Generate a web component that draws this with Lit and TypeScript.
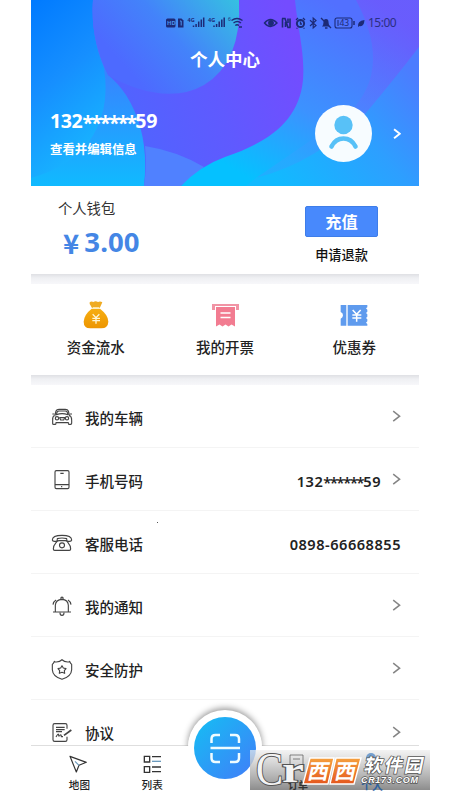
import { LitElement, html, css, svg } from "lit";
import { customElement } from "lit/decorators.js";

const chevron = html`<svg class="chev" width="9" height="13" viewBox="0 0 9 13"><path d="M1.2 1.2 7.6 6.2 1.2 11.2" fill="none" stroke="currentColor" stroke-width="1.5"/></svg>`;

const masked = (tail = "59") => html`132<span class="stars">******</span>${tail}`;

const icons = {
  car: svg`<path d="M71 138 75 122Q77 117 84 117H103Q110 117 112 122L116 138M68 136Q64 142 65 152V160Q65 162 68 162H73Q75 162 75 157H112Q112 162 114 162H119Q122 162 122 159V150Q122 142 118 136M64 131H70M117 131H123M76 133Q93 127 111 133L108 124Q107 122 103 122H84Q80 122 79 124ZM86 142H101L98 149H89Z"/><circle cx="78" cy="144" r="5"/><circle cx="108" cy="144" r="5"/>`,
  phone: svg`<rect x="72" y="302" width="42" height="54" rx="4"/><path d="M72 344H114M88 310H98M92 348V352"/>`,
  tel: svg`<path d="M64 511Q64 497 93 497Q122 497 122 511Q121 515 116 515H110Q107 514 107 507Q93 503 79 507Q79 514 76 515H70Q65 515 64 511ZM75 519Q78 513 84 513H103Q109 513 111 519Q119 528 119 538Q119 542 115 542H71Q67 542 67 538Q67 528 75 519Z"/><circle cx="93" cy="527" r="7.500"/>`,
  bell: svg`<path d="M66 154H120M73 154V134Q74 117 93 116Q111 117 112 134V154M87 156Q87 164 93 164Q99 164 99 156M66 132Q67 123 75 118M120 132Q119 123 111 118"/><circle cx="93" cy="113" r="3.500"/>`,
  shield: svg`<path d="M93 297Q99 304 110 304Q114 304 116 302Q118 308 122 311V327Q121 347 93 356Q65 347 64 327V311Q68 308 70 302Q72 304 76 304Q87 304 93 297ZM93 315 97 322 105 324 100 330 101 338 93 335 85 338 86 330 81 324 89 322Z"/>`,
  doc: svg`<path d="M108 144V134Q108 129 103 129H71Q66 129 66 134V177Q66 182 71 182H103Q108 182 108 177V168M75 140H101M75 147H101M75 153H93M75 169Q82 157 83 162Q82 170 88 163Q91 160 91 168H96"/><path d="M99 164 121 148" stroke-width="5"/>`,
};

type Row = { icon: unknown; top: number; label: string; value?: unknown; arrow: boolean };

const rows: Row[] = [
  { icon: icons.car, top: 107, label: "我的车辆", arrow: true },
  { icon: icons.phone, top: 297, label: "手机号码", value: masked(), arrow: true },
  { icon: icons.tel, top: 487, label: "客服电话", value: "0898-66668855", arrow: false },
  { icon: icons.bell, top: 103, label: "我的通知", arrow: true },
  { icon: icons.shield, top: 292, label: "安全防护", arrow: true },
  { icon: icons.doc, top: 124, label: "协议", arrow: true },
];

@customElement("app-root")
export class AppRoot extends LitElement {
  static styles = css`
    :host {
      display: block;
      width: 450px;
      height: 800px;
      overflow: hidden;
      position: relative;
      background: #fff;
      font-family: "Noto Sans", "Noto Sans CJK SC", sans-serif;
      color: #222;
    }
    * { box-sizing: border-box; }
    svg { display: block; flex: none; }
    .phone { width: 388px; height: 800px; margin-left: 31px; display: flex; flex-direction: column; }
    .stars { vertical-align: -0.07em; line-height: 0; }
    .header { height: 186px; flex: none; position: relative; color: #fff; overflow: hidden; }
    .bg { position: absolute; inset: 0; }
    .inner { position: relative; height: 100%; display: flex; flex-direction: column; }
    .status { height: 18px; margin-top: 14px; padding-left: 134px; display: flex; align-items: center; color: #1d2a77; }
    .status .right { margin-left: 18px; }
    .time { font-size: 12px; line-height: 18px; margin-left: 1px; letter-spacing: -0.5px; color: #2b2f83; }
    .title { height: 26px; margin-top: 14px; line-height: 26px; text-align: center; font-size: 17.5px; font-weight: 700; }
    .profile { display: flex; align-items: center; height: 62px; margin-top: 31px; padding: 0 18px 0 19px; }
    .who { flex: 1; display: flex; flex-direction: column; gap: 8px; padding-bottom: 1px; }
    .num { font-size: 19.6px; line-height: 24px; font-weight: 700; letter-spacing: -0.4px; padding-top: 1px; }
    .num .stars { letter-spacing: -1.8px; vertical-align: -0.1em; }
    .edit { font-size: 12.4px; line-height: 18px; font-weight: 700; }
    .profile .chev { margin-left: 20px; width: 8px; height: 12px; }
    .profile .chev path { stroke-width: 2.2; }
    .wallet { height: 88px; flex: none; display: flex; justify-content: space-between; padding: 0 41px 0 27px; }
    .wlabel { font-size: 14.3px; line-height: 20px; margin-top: 13px; color: #333; }
    .money { font-size: 27.5px; line-height: 34px; font-weight: 700; color: #4486e5; margin: 6px 0 0 5px; display: flex; gap: 5px; letter-spacing: 0.1px; }
    .acts { width: 73px; padding-top: 20px; display: flex; flex-direction: column; align-items: center; }
    .btn { width: 73px; height: 31px; background: #4889fc; border: 1px solid #3e7de9; border-radius: 2px; color: #fff; font-size: 16.2px; font-weight: 700; line-height: 30px; text-align: center; }
    .refund { font-size: 13.2px; line-height: 20px; margin-top: 8px; font-weight: 500; color: #111; white-space: nowrap; }
    .cjk { font-family: "Noto Sans CJK SC", sans-serif; }
    .gap { height: 10px; flex: none; background: linear-gradient(#dfe0e4, #eff0f3 40%, #f7f7fa); }
    .quick { height: 91px; flex: none; display: flex; }
    .q { flex: 1; display: flex; flex-direction: column; align-items: center; padding-top: 17px; font: 500 14.5px/20px "Noto Sans CJK SC", sans-serif; gap: 8px; }
    .list { flex: none; height: 370px; overflow: hidden; }
    .row { height: 63.1px; display: flex; align-items: center; padding: 2px 18px 0 20px; border-bottom: 1px solid #f4f4f4; }
    .row .label { margin-left: 12px; flex: 1; font: 500 14.5px/22px "Noto Sans CJK SC", sans-serif; padding-top: 1px; color: #222; }
    .row .value { font-size: 14.6px; font-weight: 600; letter-spacing: 0.5px; padding-top: 1px; }
    .row .value .stars { letter-spacing: -1.3px; }
    .row .chev { color: #858585; margin-left: 11px; margin-top: -1px; }
    .ico { fill: none; stroke: #444; stroke-width: 3.4; stroke-linejoin: round; }
    .tabs { height: 55px; flex: none; margin-top: -10px; background: #fff; border-top: 1px solid #dedede; padding: 0 12px; display: flex; position: relative; }
    .tab { flex: 1; display: flex; flex-direction: column; align-items: center; padding-top: 8px; font: 500 10.6px/16px "Noto Sans CJK SC", sans-serif; gap: 3px; }
    .scan { position: absolute; left: 157px; top: -35px; width: 74px; height: 74px; border-radius: 50%; background: #fff; display: grid; place-items: center; }
    .halo { position: absolute; left: 145px; top: -50px; width: 98px; height: 50px; overflow: hidden; }
    .halo i { position: absolute; left: 12px; top: 14px; width: 74px; height: 74px; border-radius: 50%; box-shadow: 0 -2px 6px 0 #999; }
    .mark { position: absolute; left: 250px; top: 750px; overflow: visible; }
    .dot { position: absolute; left: 157px; top: 522px; width: 1px; height: 1px; background: #555; }
  `;

  private background() {
    return html`<svg class="bg" width="388" height="186" viewBox="0 0 388 186">
      <defs>
        <linearGradient id="a" x1="0" y1="0" x2=".35" y2="1"><stop stop-color="#007aff"/><stop offset=".5" stop-color="#168fff"/><stop offset="1" stop-color="#18b3ff"/></linearGradient>
        <linearGradient id="b" x1="0" y1="0" x2="0" y2="1"><stop offset=".35" stop-color="#3a80ff"/><stop offset="1" stop-color="#10baff"/></linearGradient>
        <linearGradient id="c" gradientUnits="userSpaceOnUse" x1="90" y1="110" x2="270" y2="50"><stop stop-color="#5064ff"/><stop offset=".5" stop-color="#5f5aff"/><stop offset="1" stop-color="#744cff"/></linearGradient>
        <linearGradient id="d" gradientUnits="userSpaceOnUse" x1="110" y1="85" x2="205" y2="0"><stop stop-color="#4d6aff"/><stop offset=".45" stop-color="#4383fa"/><stop offset="1" stop-color="#36bfe2"/></linearGradient>
        <linearGradient id="e" gradientUnits="userSpaceOnUse" x1="330" y1="20" x2="230" y2="186"><stop stop-color="#5270ff"/><stop offset=".55" stop-color="#3c92ff"/><stop offset="1" stop-color="#05c1ff"/></linearGradient>
        <linearGradient id="f" gradientUnits="userSpaceOnUse" x1="370" y1="20" x2="265" y2="165"><stop stop-color="#7552fb"/><stop offset=".5" stop-color="#547bff"/><stop offset="1" stop-color="#2ba7ff"/></linearGradient>
        <linearGradient id="g" gradientUnits="userSpaceOnUse" x1="380" y1="70" x2="250" y2="186"><stop stop-color="#4c7cff"/><stop offset=".45" stop-color="#2d9fff"/><stop offset="1" stop-color="#12baff"/></linearGradient>
      </defs>
      <rect width="388" height="186" fill="url(#b)"/>
      <path d="M0 0H62Q60 38 73 68Q80 112 57 143Q36 168 0 178Z" fill="url(#a)"/>
      <path d="M62 0H280V186H113Q119 133 95 95Q87 83 77 75Q59 38 62 0Z" fill="url(#c)"/>
      <path d="M62 0H208Q211 62 173 85Q145 101 105 88Q88 82 77 75Q59 38 62 0Z" fill="url(#d)"/>
      <path d="M114 146Q146 151 173 167L150 186H113Q116 166 114 146Z" fill="#5081ff"/>
      <path d="M264 0C267 31 274 53 272 80C268 121 238 142 194 157Q169 166 150 186H388V0Z" fill="url(#e)"/>
      <path d="M325 0H388V48Q357 87 331 118Q284 164 225 178Q270 147 311 119Q365 75 325 0Z" fill="url(#f)" opacity=".65"/>
      <path d="M388 47Q361 82 335 113Q284 163 225 178L215 186H388Z" fill="url(#g)"/>
    </svg>`;
  }

  private statusIcons() {
    const bars = (x: number) => svg`<path d="M${x} 27V25.500M${x + 2.6} 27V24M${x + 5.2} 27V21.500M${x + 7.8} 27V19.500M${x + 10.2} 27V17.500" stroke="currentColor" stroke-width="1.500"/><text x="${x - 6}" y="22" font-size="5.500" font-weight="700" fill="currentColor">4G</text>`;
    return html`<svg width="80" height="18" viewBox="165 14 80 18">
        <rect x="166" y="18.500" width="9.500" height="9" rx="1.500" fill="currentColor"/><text x="167" y="25.200" font-size="5.800" font-weight="700" fill="#4a94ee">HD</text>
        <path d="M178 18.500H181.500L183.500 20.500V27.500H178Z" fill="currentColor"/><path d="M180 21H181.200V25.500" stroke="#4a94ee" fill="none"/>
        ${bars(193.5)}${bars(214)}
        <path d="M231.500 20.500Q237 16.500 242.500 20.500M233.500 23Q237.200 20 241 23M235.300 25.500Q237 24 239 25.500M239 27H242" fill="none" stroke="currentColor" stroke-width="1.300"/><text x="228" y="21" font-size="5" fill="currentColor">6</text>
      </svg>
      <svg class="right" width="104" height="18" viewBox="263 14 104 18" fill="none" stroke="currentColor" stroke-width="1.400">
        <path d="M264.500 23Q270.500 16 277 23Q270.500 30 264.500 23Z"/><circle cx="271" cy="23" r="2.200" fill="currentColor"/>
        <path d="M282.500 18.500V27.500M290 18.500V27.500M282 18.500H285L288 27.500H290.500M285.500 22V27M288 18.500V23" stroke-width="1.600"/>
        <circle cx="300.500" cy="23.500" r="3.600" stroke-width="2"/><path d="M296 20 298 18M305 20 303 18M297.500 28 296.500 28.500M303.500 28 304.500 28.500M300.500 21.500V24H302" stroke-width="1.300"/>
        <path d="M310 20.200 316 25.500 313.200 28V18L316 20.500 310 26" stroke-width="1.200"/>
        <path d="M322 26.500Q323.500 25 323.500 22Q323.500 19 326 19Q328.500 19 328.500 22Q328.500 25 330 26.500Z" fill="currentColor" stroke="none"/><path d="M321 18 331 28M325 28H327.500"/>
        <rect x="335" y="18" width="17" height="10" rx="2" stroke-width="1.100"/><path d="M354 21V25" stroke-width="1.500"/>
        <text x="339.500" y="26" font-size="8.500" fill="currentColor" stroke="none">43</text><path d="M338 20V26" stroke-width="1"/>
        <path d="M358 27Q357 21 364.500 20Q364 27 359.500 26Z" fill="currentColor" stroke="none"/>
      </svg>`;
  }

  private watermark() {
    return html`<svg class="mark" width="180" height="40" viewBox="0 0 180 40">
      <defs>
        <linearGradient id="wg" x1="0" y1="0" x2="0" y2="1"><stop stop-color="#eeeeee" stop-opacity=".7"/><stop offset=".45" stop-color="#bdbdbd" stop-opacity=".82"/><stop offset="1" stop-color="#858585" stop-opacity=".94"/></linearGradient>
        <linearGradient id="wo" x1="0" y1="0" x2="0" y2="1"><stop stop-color="#f5a03e"/><stop offset="1" stop-color="#e4571e"/></linearGradient>
      </defs>
      <rect width="180" height="40" fill="url(#wg)"/>
      <g fill="none" stroke="#555" stroke-width="1"><path d="M40 5H53V20H40ZM43 9H50" opacity=".7"/></g>
      <circle cx="121" cy="8" r="5" fill="#749fce"/>
      <text class="cjk" x="38" y="38.500" font-size="10" font-weight="700" fill="#333">订单</text>
      <text class="cjk" x="111" y="40" font-size="11" font-weight="700" fill="#2f629f">个人</text>
      <g font-family="Liberation Serif" fill="#f4f4f4" stroke="#555" stroke-width="2" paint-order="stroke">
        <text x="6" y="35" font-size="47" textLength="27" lengthAdjust="spacingAndGlyphs">C</text>
        <text x="32" y="32" font-size="35" font-weight="700" textLength="22" lengthAdjust="spacingAndGlyphs">r</text>
      </g>
      <g stroke="#fff" stroke-width="1.400" fill="url(#wo)">
        <path d="M60 8H84L78 34H53ZM86 8H111L104 34H80Z"/>
      </g>
      <g class="cjk" fill="#fff" font-size="21" font-weight="700" transform="skewX(-12)">
        <text x="63" y="29">西</text><text x="90" y="29">西</text>
        <g stroke="#555" stroke-width="1.500" paint-order="stroke"><text x="118" y="22.500" font-size="18.500" textLength="59">软件园</text></g>
      </g>
      <text x="111" y="32.500" font-family="Liberation Sans" font-size="9" font-weight="700" font-style="italic" fill="#fff" stroke="#555" stroke-width="1.300" paint-order="stroke" textLength="57">CR173.COM</text>
    </svg>`;
  }

  render() {
    return html`
      <div class="phone">
        <div class="header">
          ${this.background()}
          <div class="inner">
            <div class="status">${this.statusIcons()}<span class="time">15:00</span></div>
            <div class="title">个人中心</div>
            <div class="profile">
              <div class="who"><div class="num">${masked()}</div><div class="edit">查看并编辑信息</div></div>
              <svg width="58" height="58" viewBox="0 0 58 58"><circle cx="28.500" cy="28.500" r="28.500" fill="#f7fcff"/><circle cx="28.500" cy="20" r="9.200" fill="#58c1f7"/><path d="M16.500 41.500Q20.500 33.500 28.500 33.500Q36.500 33.500 40.500 41.500" fill="none" stroke="#58c1f7" stroke-width="4.600" stroke-linecap="round"/></svg>
              ${chevron}
            </div>
          </div>
        </div>
        <div class="wallet">
          <div><div class="wlabel">个人钱包</div><div class="money"><span class="cjk">¥</span><span>3.00</span></div></div>
          <div class="acts"><div class="btn">充值</div><div class="refund">申请退款</div></div>
        </div>
        <div class="gap"></div>
        <div class="quick">
          <div class="q">
            <svg width="28" height="28" viewBox="153 334 84 84"><defs><linearGradient id="bag" x1="0" y1="0" x2="0" y2="1"><stop stop-color="#f6ae12"/><stop offset="1" stop-color="#ed9500"/></linearGradient></defs><path d="M176 338Q181 334 187 337Q194 333 201 337Q208 334 214 338L209 349Q207 353 206 355H183Q179 347 176 343Z" fill="#efab23"/><path d="M182 357H207Q232 376 232 396Q231 415 211 416H178Q158 415 158 396Q159 375 182 357Z" fill="url(#bag)"/><path d="M185 354H205" stroke="#fff0bd" stroke-width="3"/><path d="M185 374 195 384 205 374M184 386H207M184 393H207M195 385V402" fill="none" stroke="#fff5d3" stroke-width="4"/></svg>
            资金流水
          </div>
          <div class="q">
            <svg width="28" height="28" viewBox="0 0 28 28"><path d="M1 3H28V9H25V5H4V9H1Z" fill="#f194a5"/><path d="M5 6H24V25.500L20.500 23.500 17.500 25.500 14.500 23.500 11.500 25.500 8.500 23.500 5 25.500Z" fill="#f27c91"/><path d="M9.500 12H19.500M9.500 16.500H19.500" stroke="#fff" stroke-width="1.600"/></svg>
            我的开票
          </div>
          <div class="q">
            <svg width="28" height="28" viewBox="346 334 84 84"><path d="M348 346H365V408H348V387Q355 384 355 377Q355 370 348 367ZM369 346H428V353L424 356 428 360V366L424 370 428 374V381L424 385 428 389V395L424 399 428 403V408H369Z" fill="#5f9bee"/><path d="M384 361 396 374 408 361M383 376H410M383 385H410M396 375V396" fill="none" stroke="#fff" stroke-width="4.500"/></svg>
            优惠券
          </div>
        </div>
        <div class="gap"></div>
        <div class="list">
          ${rows.map((r) => html`<div class="row">
            <svg class="ico" width="22" height="22" viewBox="60 ${r.top} 66 66">${r.icon}</svg>
            <span class="label">${r.label}</span>
            ${r.value ? html`<span class="value">${r.value}</span>` : ""}
            ${r.arrow ? chevron : ""}
          </div>`)}
        </div>
        <div class="tabs">
          <div class="halo"><i></i></div>
          <div class="tab"><svg width="22" height="20" viewBox="116 222 66 60" fill="none" stroke="#333" stroke-width="3.500" stroke-linejoin="round"><path d="M122 229 171 247 149 256 141 276Z"/><path d="M137 244 149 256" stroke="#6b9abd"/></svg>地图</div>
          <div class="tab"><svg width="22" height="20" viewBox="330 222 66 60" fill="none" stroke="#333" stroke-width="4"><path d="M340 229H356V246H340ZM340 260H356V277H340ZM363 230H390M363 261H390M363 275H390"/><path d="M363 244H390" stroke="#6b9abd"/></svg>列表</div>
          <div class="tab"></div><div class="tab"></div><div class="tab"></div>
          <div class="scan"><svg width="62" height="62" viewBox="0 0 62 62"><defs><linearGradient id="s" x1=".1" y1=".1" x2=".9" y2=".9"><stop stop-color="#19b8f4"/><stop offset="1" stop-color="#3d83f8"/></linearGradient></defs><circle cx="31" cy="31" r="31" fill="url(#s)"/><path d="M17.500 26V22Q17.500 18 21.500 18H26M36 18H41Q45 18 45 22V26M17.500 36V41Q17.500 45 21.500 45H26M36 45H41Q45 45 45 41V36M16.500 31H46" fill="none" stroke="#effcff" stroke-width="2.500"/></svg></div>
        </div>
      </div>
      <div class="dot"></div>
      ${this.watermark()}
    `;
  }
}
